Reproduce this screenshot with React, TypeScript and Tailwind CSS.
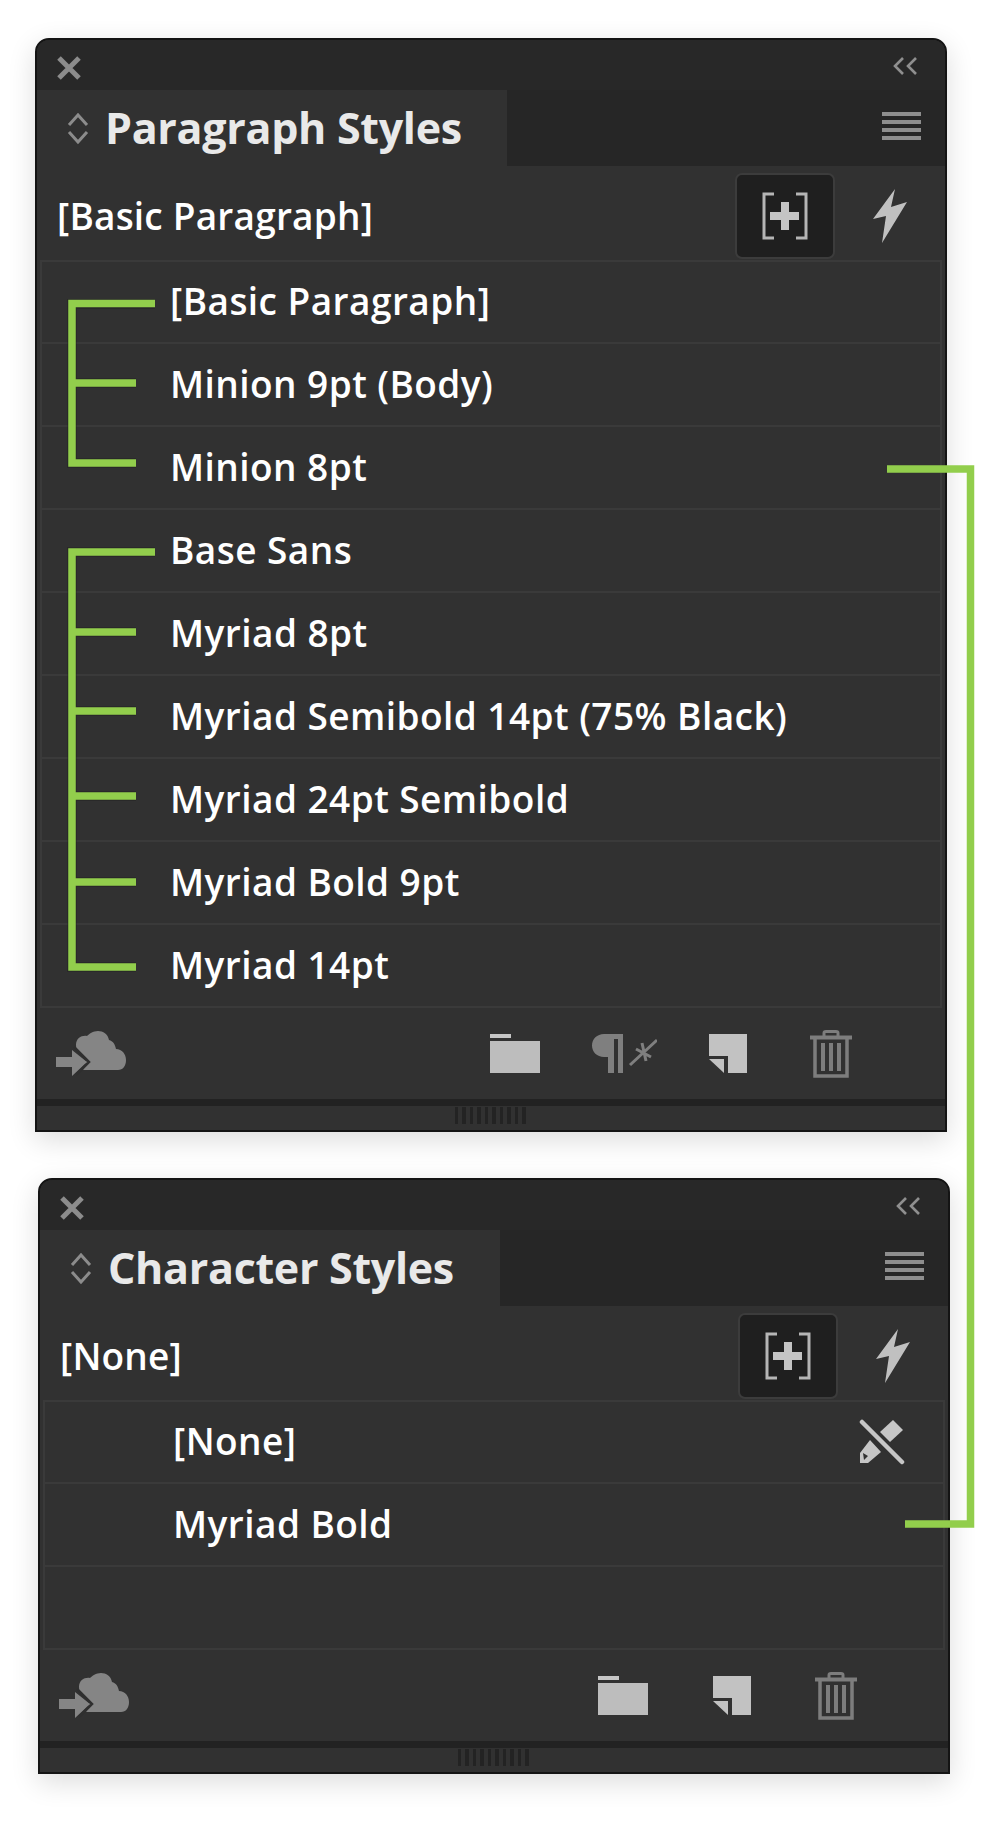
import React from "react";

const font = { fontFamily: '"Open Sans", "Noto Sans", sans-serif' };

function CloseIcon() {
  return (
    <svg width="26" height="26" viewBox="0 0 26 26" className="block">
      <path d="M3 3 L23 23 M23 3 L3 23" stroke="#8c8c8c" strokeWidth="5" strokeLinecap="butt" />
    </svg>
  );
}
function CollapseIcon() {
  return (
    <svg width="26" height="20" viewBox="0 0 26 20" className="block">
      <path d="M11 2 L3 10 L11 18 M24 2 L16 10 L24 18" stroke="#8f8f8f" strokeWidth="2.6" fill="none" />
    </svg>
  );
}
function Stepper() {
  return (
    <svg width="22" height="33" viewBox="0 0 22 33" className="block">
      <path d="M2 13 L11 3 L20 13 M2 20 L11 30 L20 20" stroke="#8c8c8c" strokeWidth="3" fill="none" />
    </svg>
  );
}
function Hamburger() {
  return (
    <div className="flex flex-col gap-[4px] w-[39px]">
      <div className="h-[4px] bg-[#8e8e8e]" />
      <div className="h-[4px] bg-[#8e8e8e]" />
      <div className="h-[4px] bg-[#8e8e8e]" />
      <div className="h-[4px] bg-[#8e8e8e]" />
    </div>
  );
}
function BracketPlus() {
  return (
    <svg width="48" height="48" viewBox="0 0 48 48" className="block">
      <path d="M13 2 H3 V46 H13 M35 2 H45 V46 H35" stroke="#b5b5b5" strokeWidth="3" fill="none" />
      <path d="M20 10 H28 V20 H38 V28 H28 V38 H20 V28 H9 V20 H20 Z" fill="#c4c4c4" />
    </svg>
  );
}
function Bolt() {
  return (
    <svg width="36" height="56" viewBox="0 0 36 56" className="block">
      <path d="M23 1 L1 31 L14 28 L10 55 L35 14 L19 19 Z" fill="#c0c0c0" />
    </svg>
  );
}
function Cloud() {
  return (
    <svg width="70" height="46" viewBox="0 0 70 46" className="block">
      <path
        d="M27 39 H62 C67 39 70 35 70 29 C70 23 66 18 60 18 C59 13 57 10 53 9 C52 3 47 0 42 0 C37 0 33 3 31 5 C26 4 20 7 20 14 C20 18 21 20 23 22 L31 29 Z"
        fill="#858585"
      />
      <path d="M0 26 H16 V19 L31 31 L16 45 V36 H0 Z" fill="#858585" />
      <path d="M18 16 L33 31 L20 44" stroke="#2f2f2f" strokeWidth="2.5" fill="none" />
    </svg>
  );
}
function Folder() {
  return (
    <svg width="50" height="39" viewBox="0 0 50 39" className="block">
      <rect x="0" y="0" width="21" height="4" fill="#c6c6c6" />
      <rect x="0" y="7" width="50" height="32" fill="#bdbdbd" />
    </svg>
  );
}
function Pilcrow() {
  return (
    <svg width="65" height="40" viewBox="0 0 65 40" className="block">
      <path d="M12 0 H31 V39 H26 V5 H22 V39 H16 V23 H12 C5 23 0 18 0 11.500 C0 5 5 0 12 0 Z" fill="#7f7f7f" />
      <path d="M38 31 L65 6 M44 15 L59 23 M50 9 L54 27" stroke="#7f7f7f" strokeWidth="3" fill="none" />
    </svg>
  );
}
function NewPage() {
  return (
    <svg width="40" height="40" viewBox="0 0 40 40" className="block">
      <path d="M1 0 H39 V39 H20 V22 H1 Z" fill="#c2c2c2" />
      <path d="M1 25 H16 V39 Z" fill="#c2c2c2" />
    </svg>
  );
}
function Trash() {
  return (
    <svg width="42" height="48" viewBox="0 0 42 48" className="block">
      <path d="M14 7 V3 C14 2 15 1.500 16 1.500 H26 C27 1.500 28 2 28 3 V7" stroke="#7d7d7d" strokeWidth="3" fill="none" />
      <path d="M0 7.500 H42" stroke="#7d7d7d" strokeWidth="4" />
      <path d="M5 9 V46 H37 V9" stroke="#7d7d7d" strokeWidth="3.500" fill="none" />
      <path d="M13 13 V41 M21 13 V41 M29 13 V41" stroke="#7d7d7d" strokeWidth="4" />
    </svg>
  );
}
function NoPencil() {
  return (
    <svg width="47" height="46" viewBox="0 0 47 46" className="block">
      <path d="M35 1 L45 11 L32 23 L22 13 Z" fill="#c6c6c6" />
      <path fillRule="evenodd" d="M12 21 L23 33 L10 44 L2 44 L2 34 Z M5 34 L10 37 L6 41 Z" fill="#c6c6c6" />
      <path d="M4 3 L44 43" stroke="#313131" strokeWidth="9" />
      <path d="M4 3 L44 43" stroke="#c6c6c6" strokeWidth="4.500" strokeLinecap="round" />
    </svg>
  );
}

function Grip() {
  return (
    <div className="flex gap-[4px] h-[17px]">
      {Array.from({ length: 10 }).map((_, i) => (
        <div key={i} className="w-[3.5px] h-full bg-[#232323]" />
      ))}
    </div>
  );
}

function Row({ label, tail }: { label: string; tail?: React.ReactNode }) {
  return (
    <div className="h-[83px] first:h-[81.5px] last:h-[81.5px] flex items-center justify-between pl-[128px] pr-[38px] border-b-2 border-[#3a3a3a] last:border-b-0">
      <span className="text-[37px] font-semibold leading-none text-white tracking-[0.45px] whitespace-nowrap relative top-[-1px]">
        {label}
      </span>
      {tail}
    </div>
  );
}

function Panel({
  title,
  tabWidth,
  current,
  rows,
  footer,
}: {
  title: string;
  tabWidth: string;
  current: string;
  rows: { label: string; tail?: React.ReactNode }[];
  footer: React.ReactNode;
}) {
  return (
    <div
      className="w-[912px] rounded-t-[14px] bg-[#313131] border-2 border-[#141414] shadow-[0_8px_28px_rgba(0,0,0,0.14)] overflow-hidden"
      style={font}
    >
      <div className="h-[50px] bg-[#282828] flex items-center justify-between pl-[19px] pr-[27px]">
        <div className="pt-[5px]"><CloseIcon /></div>
        <div className="pt-[2px]"><CollapseIcon /></div>
      </div>
      <div className="h-[76px] bg-[#262626] flex items-stretch">
        <div className={`${tabWidth} bg-[#313131] flex items-center pl-[30px] gap-[16px]`}>
          <Stepper />
          <span className="text-[43px] font-bold text-[#e9e9e9] leading-none tracking-[-0.3px] whitespace-nowrap relative top-[-1px]">
            {title}
          </span>
        </div>
        <div className="flex-1 flex items-center justify-end pr-[24px] pb-[4px]">
          <Hamburger />
        </div>
      </div>
      <div className="h-[94px] flex items-center justify-between pl-[20px] pr-[37px]">
        <span className="text-[37px] font-semibold text-white leading-none tracking-[0.2px] whitespace-nowrap relative top-[2px]">
          {current}
        </span>
        <div className="flex items-center gap-[37px] mt-[5px]">
          <div className="w-[100px] h-[86px] rounded-[7px] bg-[#1f1f1f] border-2 border-[#3c3c3c] flex items-center justify-center">
            <BracketPlus />
          </div>
          <Bolt />
        </div>
      </div>
      <div className="mx-[3px] border-2 border-[#3a3a3a]">
        {rows.map((r) => (
          <Row key={r.label} label={r.label} tail={r.tail} />
        ))}
      </div>
      <div className="h-[91px]">{footer}</div>
      <div className="h-[7px] bg-[#222222]" />
      <div className="h-[24px] flex justify-center pt-[1px] pr-[2px]">
        <Grip />
      </div>
    </div>
  );
}

function Connectors() {
  const g = "#92ce4c";
  return (
    <svg width="1000" height="1823" viewBox="0 0 1000 1823" className="absolute left-0 top-0 pointer-events-none">
      <g stroke="#1c1c1c" strokeOpacity="0.35" strokeWidth="10" fill="none">
        <path d="M155 304 H72 V463 H136 M72 383 H136" />
        <path d="M155 552 H72 V967 H136 M72 632 H136 M72 711 H136 M72 796 H136 M72 882 H136" />
      </g>
      <g stroke={g} strokeWidth="7.500" fill="none">
        <path d="M155 303.500 H72 V463 H136 M72 383 H136" />
        <path d="M155 552 H72 V967 H136 M72 632 H136 M72 711 H136 M72 796 H136 M72 882 H136" />
        <path d="M887 469 H970.500 V1524 H905" />
      </g>
    </svg>
  );
}

export default function App() {
  const footer1 = (
    <div className="h-full flex items-center pl-[19px] pr-[93px]">
      <Cloud />
      <div className="ml-auto flex items-center">
        <Folder />
        <div className="ml-[52px]"><Pilcrow /></div>
        <div className="ml-[51px]"><NewPage /></div>
        <div className="ml-[62px]"><Trash /></div>
      </div>
    </div>
  );
  const footer2 = (
    <div className="h-full flex items-center pl-[19px] pr-[91px]">
      <Cloud />
      <div className="ml-auto flex items-center">
        <Folder />
        <div className="ml-[64px]"><NewPage /></div>
        <div className="ml-[63px]"><Trash /></div>
      </div>
    </div>
  );
  return (
    <div className="relative w-[1000px] h-[1823px] bg-white overflow-hidden">
      <div className="pt-[38px] pl-[35px] flex flex-col gap-[46px]">
        <Panel
          title="Paragraph Styles"
          tabWidth="w-[470px]"
          current="[Basic Paragraph]"
          footer={footer1}
          rows={[
            { label: "[Basic Paragraph]" },
            { label: "Minion 9pt (Body)" },
            { label: "Minion 8pt" },
            { label: "Base Sans" },
            { label: "Myriad 8pt" },
            { label: "Myriad Semibold 14pt (75% Black)" },
            { label: "Myriad 24pt Semibold" },
            { label: "Myriad Bold 9pt" },
            { label: "Myriad 14pt" },
          ]}
        />
        <div className="ml-[3px]">
          <Panel
            title="Character Styles"
            tabWidth="w-[460px]"
            current="[None]"
            footer={footer2}
            rows={[
              { label: "[None]", tail: <NoPencil /> },
              { label: "Myriad Bold" },
              { label: "\u00a0" },
            ]}
          />
        </div>
      </div>
      <Connectors />
    </div>
  );
}
